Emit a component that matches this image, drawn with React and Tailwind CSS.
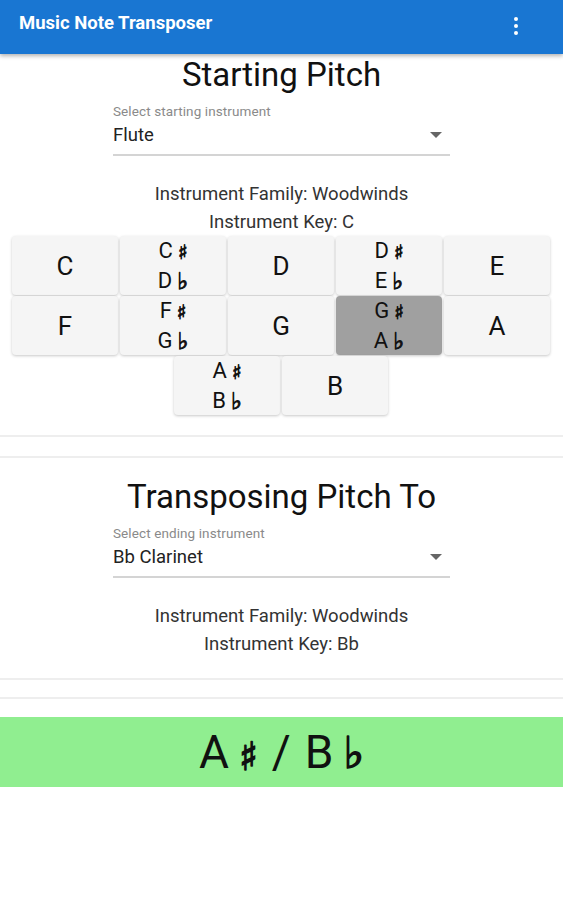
import React from "react";

const Sharp = () => (
  <span className="ml-[5px] inline-block align-[-1px] text-[0.9em] font-['DejaVu_Sans',sans-serif] [-webkit-text-stroke:0.9px_#111]">♯</span>
);
const Flat = () => (
  <span className="ml-[5px] inline-block align-[-1px] text-[1.05em] font-['DejaVu_Sans',sans-serif] [-webkit-text-stroke:0.9px_#111]">♭</span>
);

function NoteBtn({ a, b, selected }) {
  return (
    <div
      className={`flex h-[59px] w-[106px] flex-col items-center justify-center rounded-[4px] text-[#111] shadow-[0_1px_3px_rgba(0,0,0,0.22)] ${
        selected ? "bg-[#a0a0a0]" : "bg-[#f5f5f5]"
      }`}
    >
      {b ? (
        <>
          <div className="text-[22px] leading-[28px]">
            {a}
            <Sharp />
          </div>
          <div className="text-[22px] leading-[28px]">
            {b}
            <Flat />
          </div>
        </>
      ) : (
        <div className="text-[26px] leading-[28px]">{a}</div>
      )}
    </div>
  );
}

function Select({ label, value }) {
  return (
    <div className="mx-auto w-[337px]">
      <div className="text-[13.5px] leading-[16px] tracking-[0.1px] text-[#8a8a8a]">{label}</div>
      <div className="mt-[4px] flex h-[24px] items-center justify-between">
        <span className="text-[18.5px] leading-[24px] text-[#222]">{value}</span>
        <svg width="12" height="6" viewBox="0 0 10 5" className="mr-[8px]">
          <path d="M0 0 L10 0 L5 5 Z" fill="#666" />
        </svg>
      </div>
      <div className="mt-[7px] h-[2px] bg-[#d4d4d4]" />
    </div>
  );
}

function Info({ family, keyName }) {
  return (
    <div className="mt-[24px] text-center text-[18.5px] leading-[28px] text-[#333]">
      <div>Instrument Family: {family}</div>
      <div>Instrument Key: {keyName}</div>
    </div>
  );
}

const Divider = () => <div className="h-[2px] bg-[#eeeeee]" />;

export default function App() {
  const notes = [
    ["C"],
    ["C", "D"],
    ["D"],
    ["D", "E"],
    ["E"],
    ["F"],
    ["F", "G"],
    ["G"],
    ["G", "A", true],
    ["A"],
    ["A", "B"],
    ["B"],
  ];
  return (
    <div className="min-h-[900px] w-full bg-white font-['Roboto',sans-serif]">
      <div className="relative z-10 flex h-[54px] items-center justify-between bg-[#1976d2] pl-[19px] pr-[35px] shadow-[0_2px_4px_rgba(0,0,0,0.3)]">
        <div className="-mt-[6px] text-[18.5px] font-bold text-white">Music Note Transposer</div>
        <svg width="24" height="24" viewBox="0 0 24 24" className="-mt-[2px]">
          <circle cx="12" cy="5" r="2" fill="white" />
          <circle cx="12" cy="12" r="2" fill="white" />
          <circle cx="12" cy="19" r="2" fill="white" />
        </svg>
      </div>

      <div className="mt-[3px] text-center text-[33px] leading-[36px] text-[#111]">Starting Pitch</div>
      <div className="mt-[10px]">
        <Select label="Select starting instrument" value="Flute" />
      </div>
      <Info family="Woodwinds" keyName="C" />

      <div className="px-[12px]">
        <div className="flex w-[538px] flex-wrap justify-center gap-x-[2px] gap-y-[1px]">
          {notes.map((n, i) => (
            <NoteBtn key={i} a={n[0]} b={typeof n[1] === "string" ? n[1] : null} selected={n[2]} />
          ))}
        </div>
      </div>

      <div className="mt-[20px]">
        <Divider />
      </div>
      <div className="mt-[19px]">
        <Divider />
      </div>

      <div className="mt-[21px] text-center text-[33px] leading-[36px] text-[#111]">Transposing Pitch To</div>
      <div className="mt-[10px]">
        <Select label="Select ending instrument" value="Bb Clarinet" />
      </div>
      <Info family="Woodwinds" keyName="Bb" />

      <div className="mt-[20px]">
        <Divider />
      </div>
      <div className="mt-[17px]">
        <Divider />
      </div>

      <div className="mt-[18px] flex h-[70px] items-center justify-center bg-[#90ee90] text-[46px] text-[#111]">
        <span>
          A<span className="ml-[10px] inline-block align-[-2px] text-[0.85em] font-['DejaVu_Sans',sans-serif] [-webkit-text-stroke:1.5px_#111]">♯</span>
          <span className="mx-[14px]">/</span>B
          <span className="ml-[10px] inline-block align-[0px] text-[0.95em] font-['DejaVu_Sans',sans-serif] [-webkit-text-stroke:1.5px_#111]">♭</span>
        </span>
      </div>
    </div>
  );
}
